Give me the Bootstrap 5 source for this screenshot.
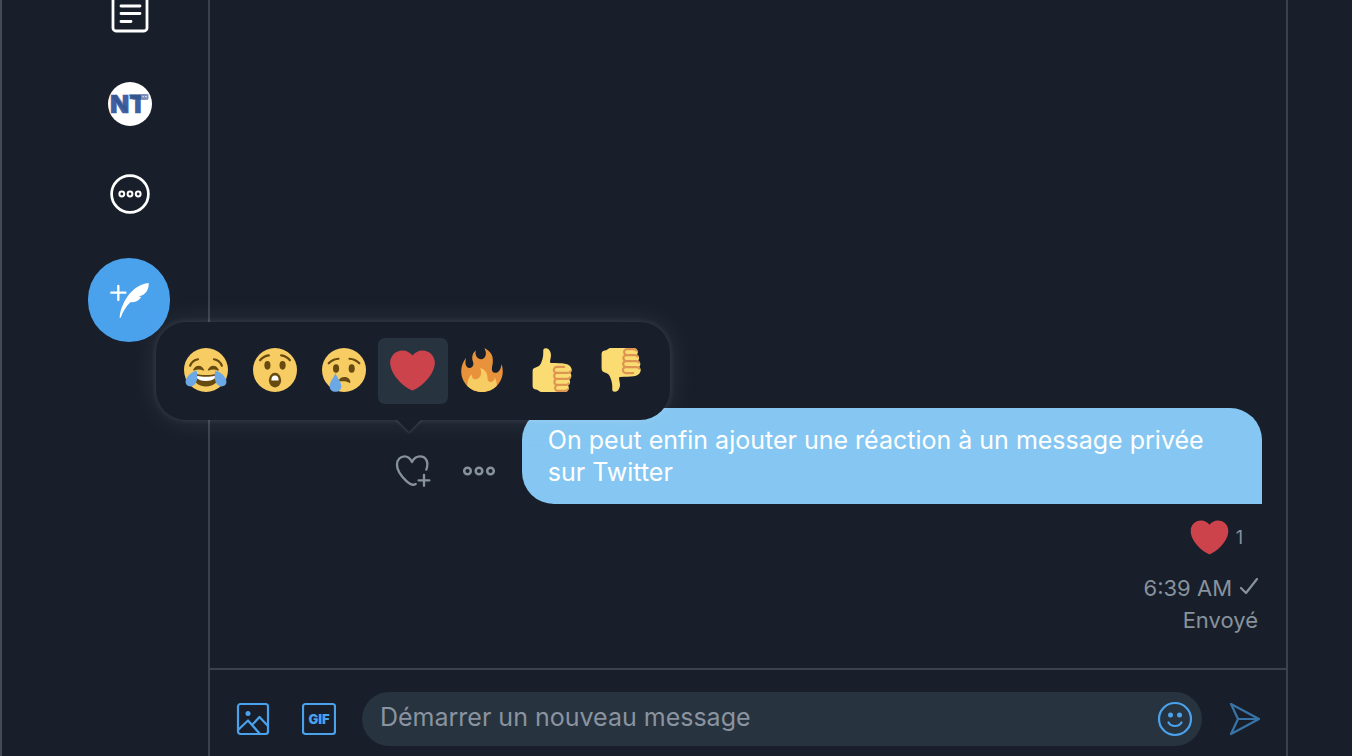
<!DOCTYPE html>
<html lang="fr" data-bs-theme="dark">
<head>
<meta charset="utf-8">
<meta name="viewport" content="width=device-width, initial-scale=1">
<title>Messages</title>
<link href="https://cdn.jsdelivr.net/npm/bootstrap@5.3.0/dist/css/bootstrap.min.css" rel="stylesheet">
<style>
  :root { --ink: #181f2a; --line: #3a424d; --soft: #27333f; --muted-ink: #87929d; --blue: #4aa1ec; --bubble: #85c7f2; }
  body { background: var(--ink); font-family: Inter, "Liberation Sans", sans-serif; color: #fff; }
  svg { display: block; }
  .side { width: 208px; border-left: 2px solid #424a55; padding-right: 38px; }
  .side-list { width: 82px; margin-top: -31px; }
  .side-item { height: 90px; padding-left: 2px; color: #fff; }
  .plain { background: none; border: 0; padding: 0; color: inherit; }
  .compose { height: 84px; margin-top: 19px; border-radius: 42px; background: var(--blue); }
  .chat { border: solid var(--line); border-width: 0 2px; margin-right: 64px; }
  .thread { padding: 0 24px 32px; }
  .bubble { width: 72%; padding: 16px 26px; background: var(--bubble); border-radius: 32px 32px 0 32px; font-size: 25px; line-height: 32px; }
  .actions { gap: 32px; margin: 0 27px 15px 0; color: var(--muted-ink); }
  .picker { bottom: 100%; left: 50%; transform: translateX(-50%); width: 514px; height: 98px; margin-bottom: 33px; padding: 16px; border-radius: 30px; background: var(--ink); z-index: 5;
    box-shadow: 0 0 6px rgba(255,255,255,.12), 0 0 30px rgba(200,215,240,.11); }
  .picker-arrow { top: 100%; left: 240px; margin-top: -1px; filter: drop-shadow(0 1px 1px rgba(255,255,255,.16)); }
  .pick { border-radius: 7px; padding-bottom: 2px; }
  .pick.active { background: var(--soft); }
  .reaction { padding: 16px 19px 16px 0; gap: 7px; font-size: 18px; line-height: 36px; color: var(--muted-ink); }
  .status { padding-right: 4px; font-size: 22px; line-height: 32px; color: var(--muted-ink); }
  .composer { border-top: 2px solid var(--line); padding: 22px 24px 10px 26px; color: var(--blue); }
  .entry { height: 54px; border-radius: 27px; background: var(--soft); padding: 0 9px 0 18px; margin: 0 26px; }
  .entry input { font-size: 25px; line-height: 32px; color: #fff; background: none; border: 0; outline: 0; padding: 0 0 4px; min-width: 0; }
  .entry input::placeholder { color: #8a939f; opacity: 1; }
  .send { opacity: .65; }
</style>
</head>
<body>
<svg width="0" height="0" class="position-absolute" aria-hidden="true">
  <symbol id="heart" viewBox="0 0 36 36"><path fill="#cc434c" d="M35.885 11.833c0-5.45-4.418-9.868-9.867-9.868-3.308 0-6.227 1.633-8.018 4.129-1.791-2.496-4.71-4.129-8.017-4.129-5.45 0-9.868 4.417-9.868 9.868 0 .772.098 1.52.266 2.241C1.751 22.587 11.216 31.568 18 34.034c6.783-2.466 16.249-11.447 17.617-19.959.17-.721.268-1.469.268-2.242z"/></symbol>
  <symbol id="thumb" viewBox="0 0 36 36"><path fill="#fadc72" d="M34.956 17.916c0-.503-.12-.975-.321-1.404-1.341-4.326-7.619-4.01-16.549-4.221-1.493-.035-.639-1.798-.115-5.668.341-2.517-1.282-6.382-4.01-6.382-4.498 0-.171 3.548-4.148 12.322-2.125 4.688-6.875 2.062-6.875 6.771v10.719c0 1.833.18 3.595 2.758 3.885C8.195 34.219 7.633 36 11.238 36h18.044c1.838 0 3.333-1.496 3.333-3.334 0-.762-.267-1.456-.698-2.018 1.02-.571 1.72-1.649 1.72-2.899 0-.76-.266-1.454-.696-2.015 1.023-.57 1.725-1.649 1.725-2.901 0-.909-.368-1.733-.961-2.336.757-.611 1.251-1.535 1.251-2.581z"/><path fill="#df9552" d="M23.02 21.249h8.604c1.17 0 2.268-.626 2.866-1.633.246-.415.109-.952-.307-1.199-.415-.247-.952-.108-1.199.307-.283.479-.806.775-1.361.775h-8.81c-.873 0-1.583-.71-1.583-1.583s.71-1.583 1.583-1.583H28.7c.483 0 .875-.392.875-.875s-.392-.875-.875-.875h-5.888c-1.838 0-3.333 1.495-3.333 3.333 0 1.025.475 1.932 1.205 2.544-.615.605-.998 1.445-.998 2.373 0 1.028.478 1.938 1.212 2.549-.611.604-.99 1.441-.99 2.367 0 1.12.559 2.108 1.409 2.713-.524.589-.852 1.356-.852 2.204 0 1.838 1.495 3.333 3.333 3.333h5.484c1.17 0 2.269-.625 2.867-1.632.247-.415.11-.952-.305-1.199-.416-.245-.953-.11-1.199.305-.285.479-.808.776-1.363.776h-5.484c-.873 0-1.583-.71-1.583-1.583s.71-1.583 1.583-1.583h6.506c1.17 0 2.27-.626 2.867-1.633.247-.416.11-.953-.305-1.199-.419-.251-.954-.11-1.199.305-.289.487-.799.777-1.363.777h-7.063c-.873 0-1.583-.711-1.583-1.584s.71-1.583 1.583-1.583h8.091c1.17 0 2.269-.625 2.867-1.632.247-.415.11-.952-.305-1.199-.417-.246-.953-.11-1.199.305-.289.486-.799.776-1.363.776H23.02c-.873 0-1.583-.71-1.583-1.583s.71-1.584 1.583-1.584z"/></symbol>
</svg>

<div class="d-flex min-vh-100 overflow-hidden">
  <nav class="side flex-shrink-0 d-flex flex-column align-items-end" aria-label="Navigation">
    <div class="side-list d-flex flex-column">
      <a href="#" class="side-item d-flex align-items-center justify-content-center" aria-label="Listes">
        <svg width="40" height="40" viewBox="0 0 40 40" fill="none" stroke="#fff" stroke-width="2.8" stroke-linecap="round"><rect x="3" y="1" width="34" height="36" rx="3"/><path d="M11 4H30M11 12H30M11 19.500H30M11 27.500H21"/></svg>
      </a>
      <a href="#" class="side-item d-flex align-items-center justify-content-center" aria-label="Profil">
        <svg width="44" height="44" viewBox="0 0 44 44"><circle cx="22" cy="22" r="22" fill="#fff"/><text x="2" y="31" font-family="Inter, sans-serif" font-size="25" font-weight="900" fill="#3f60a2" stroke="#3f60a2" stroke-width=".6">NT</text><path d="M21 12.500h19v5H25z" fill="#35558f"/><path d="M33 12.500h7.500v4.500H33z" fill="#7d8fb8"/><path d="M34.500 14.700h1.500m1 0h2" stroke="#dfe5f0"/><path d="M4 13.500l5-1 10 13v5L4 16z" fill="#2d4984" opacity=".4"/></svg>
      </a>
      <a href="#" class="side-item d-flex align-items-center justify-content-center" aria-label="Plus">
        <svg width="40" height="40" viewBox="0 0 40 40" fill="none" stroke="#fff" stroke-width="2.700"><circle cx="20" cy="20" r="18.400"/><g stroke-width="2"><circle cx="11.800" cy="20" r="2.400"/><circle cx="20" cy="20" r="2.400"/><circle cx="28.200" cy="20" r="2.400"/></g></svg>
      </a>
      <button type="button" class="plain compose d-flex align-items-center justify-content-center" aria-label="Tweeter">
        <svg width="44" height="42" viewBox="0 0 132 126"><path d="M13 41h42M34 21v42" stroke="#fff" stroke-width="7" stroke-linecap="round"/><path fill="#fff" d="M38 117C38 98 47 74 62 52 79 29 98 15 125 12 126 25 122 37 112 45 106 49 100 51 95 53L103 54C96 65 84 71 70 70 57 82 48 98 41 116z"/></svg>
      </button>
    </div>
  </nav>

  <main class="chat flex-grow-1 d-flex flex-column">
    <section class="thread flex-grow-1 d-flex flex-column justify-content-end">
      <div class="d-flex justify-content-end align-items-end">
        <div class="actions d-flex align-items-center">
          <div class="position-relative">
            <button type="button" class="plain d-block" aria-label="Réagir">
              <svg width="36" height="36" viewBox="0 0 108 108" fill="none" stroke="currentColor" stroke-width="7" stroke-linecap="round" stroke-linejoin="round"><path d="M62 93C53 99 44 94 32 82 15 65 6 51 6 35 6 19 17 10 29 10 40 10 46 17 51 27 56 17 64 10 75 10 93 10 102 27 94 50M87 66V98M71 82H103"/></svg>
            </button>
            <div class="picker position-absolute d-flex" role="toolbar" aria-label="Réactions">
              <button type="button" class="plain pick flex-fill d-flex align-items-center justify-content-center" aria-label="Joie">
                <svg width="44" height="44" viewBox="0 0 36 36"><circle cx="18" cy="18" r="18" fill="#f7cc63"/><g fill="none" stroke="#664a10" stroke-width="1.800" stroke-linecap="round"><path d="M5 14.500Q6.800 10 11.500 9.200M31 14.500Q29.200 10 24.500 9.200"/></g><path fill="#664a10" d="M28.457 17.797c-.06-.135-1.499-3.297-4.457-3.297-2.957 0-4.397 3.162-4.457 3.297-.092.207-.032.449.145.591.175.142.426.147.61.014.012-.009 1.262-.902 3.702-.902 2.426 0 3.674.881 3.702.901.088.066.194.099.298.099.11 0 .221-.037.312-.109.177-.142.238-.386.145-.594zm-12 0c-.06-.135-1.499-3.297-4.457-3.297-2.957 0-4.397 3.162-4.457 3.297-.092.207-.032.449.145.591.175.142.426.147.61.014.012-.009 1.262-.902 3.702-.902 2.426 0 3.674.881 3.702.901.088.066.194.099.298.099.11 0 .221-.037.312-.109.177-.142.238-.386.145-.594zM18 22c-3.600 0-6-.400-9-1-.700-.100-2 0-2 2 0 4 4.600 8.500 11 8.500s11-4.500 11-8.500c0-2-1.300-2.100-2-2-3 .600-5.400 1-9 1z"/><path fill="#fff" d="M9 22.500s3 1 9 1 9-1 9-1-1.500 4.500-9 4.500-9-4.500-9-4.500z"/><path id="tear" fill="#6ba8e5" d="M10.300 18.500C6 19.500 1.300 24 1.300 27.500 1.300 30.300 3.200 31.500 5.300 31.500 9.900 31.500 12 25.500 10.300 18.500z"/><use href="#tear" transform="matrix(-1 0 0 1 36 0)"/></svg>
              </button>
              <button type="button" class="plain pick flex-fill d-flex align-items-center justify-content-center" aria-label="Surprise">
                <svg width="44" height="44" viewBox="0 0 36 36"><circle cx="18" cy="18" r="18" fill="#f7cc63"/><path d="M5.800 10Q8.500 6.500 13 6M30.200 10Q27.500 6.500 23 6" fill="none" stroke="#664a10" stroke-width="1.800" stroke-linecap="round"/><g fill="#664a10"><ellipse cx="11.800" cy="14.200" rx="2.500" ry="3.500"/><ellipse cx="24.200" cy="14.200" rx="2.500" ry="3.500"/><ellipse cx="18" cy="26.300" rx="5" ry="6"/></g><path fill="#fff" d="M15 26.500Q15 22.500 18 22.500T21 26.500z"/></svg>
              </button>
              <button type="button" class="plain pick flex-fill d-flex align-items-center justify-content-center" aria-label="Tristesse">
                <svg width="44" height="44" viewBox="0 0 36 36"><circle cx="18" cy="18" r="18" fill="#f7cc63"/><path d="M5.500 12.500Q9 9 13.500 8.800M30.500 12.500Q27 9 22.500 8.800" fill="none" stroke="#664a10" stroke-width="1.800" stroke-linecap="round"/><g fill="#664a10"><ellipse cx="11.500" cy="16.800" rx="2.500" ry="3.500"/><ellipse cx="24.300" cy="16.800" rx="2.500" ry="3.500"/><path d="M13.500 27.500C14 25 16 23.800 18.500 23.800 21.500 23.800 23.200 26 23.200 28 23.200 29 22.500 28.800 21.800 28.300 19.500 26.800 16.500 27.300 13.500 27.500z"/></g><path fill="#6ba8e5" d="M11 20.500C12 24 15.800 27.500 15.800 31.200 15.800 34 13.800 35.800 11 35.800S6.200 34 6.200 31.200C6.200 27.500 10 24 11 20.500z"/></svg>
              </button>
              <button type="button" class="plain pick active flex-fill d-flex align-items-center justify-content-center" aria-label="Cœur"><svg width="45" height="45"><use href="#heart"/></svg></button>
              <button type="button" class="plain pick flex-fill d-flex align-items-center justify-content-center" aria-label="Feu">
                <svg width="44" height="44" viewBox="0 0 36 36"><path fill="#e8923b" d="M35 19c0-2.062-.367-4.039-1.040-5.868-.460 5.389-3.333 8.157-6.335 6.868-2.812-1.208-.917-5.917-.777-8.164.236-3.809-.012-8.169-6.931-11.794 2.875 5.500.333 8.917-2.333 9.125-2.958.231-5.667-2.542-4.667-7.042-3.238 2.386-3.332 6.402-2.333 9 1.042 2.708-.042 4.958-2.583 5.208-2.840.280-4.418-3.041-2.963-8.333C2.520 10.965 1 14.805 1 19c0 9.389 7.611 17 17 17s17-7.611 17-17z"/><path fill="#f7cc63" d="M28.394 23.999c.148 3.084-2.561 4.293-4.019 3.709-2.106-.843-1.541-2.291-2.083-5.291s-2.625-5.083-5.708-6c2.250 6.333-1.247 8.667-3.080 9.084-1.872.426-3.753-.001-3.968-4.007C7.352 23.668 6 26.676 6 30c0 .368.023.730.055 1.090C9.125 34.124 13.342 36 18 36s8.875-1.876 11.945-4.910c.032-.360.055-.722.055-1.090 0-2.187-.584-4.236-1.606-6.001z"/></svg>
              </button>
              <button type="button" class="plain pick flex-fill d-flex align-items-center justify-content-center" aria-label="J'aime"><svg width="44" height="44"><use href="#thumb"/></svg></button>
              <button type="button" class="plain pick flex-fill d-flex align-items-center justify-content-center" aria-label="Je n'aime pas"><svg width="44" height="44" viewBox="0 0 44 44"><use href="#thumb" width="44" height="44" transform="matrix(1 0 0 -1 0 44)"/></svg></button>
              <svg class="picker-arrow position-absolute" width="26" height="14" viewBox="0 0 26 14"><path fill="#181f2a" d="M0 0H26L13 13z"/></svg>
            </div>
          </div>
          <button type="button" class="plain d-block" aria-label="Options">
            <svg width="32" height="12" viewBox="0 0 32 12" fill="none" stroke="currentColor" stroke-width="2.500"><circle cx="4.500" cy="6" r="3.300"/><circle cx="16" cy="6" r="3.300"/><circle cx="27.500" cy="6" r="3.300"/></svg>
          </button>
        </div>
        <div class="bubble">On peut enfin ajouter une réaction à un message privée sur Twitter</div>
      </div>
      <div class="reaction d-flex justify-content-end align-items-center"><svg width="39" height="36" viewBox="0 1.500 36 34"><use href="#heart" width="36" height="36"/></svg><span>1</span></div>
      <div class="status text-end">
        <div class="d-flex justify-content-end align-items-center gap-2">6:39 AM
          <svg width="18" height="20" viewBox="0 0 18 20" fill="none" stroke="currentColor" stroke-width="2.200" stroke-linecap="round" stroke-linejoin="round"><path d="M1 10L6 15 17 1"/></svg></div>
        <div>Envoyé</div>
      </div>
    </section>

    <form class="composer d-flex align-items-center" onsubmit="return false">
      <button type="button" class="plain" aria-label="Image">
        <svg width="34" height="34" viewBox="0 0 34 34" fill="none" stroke="currentColor" stroke-width="2.200" stroke-linejoin="round"><rect x="2" y="2" width="30" height="30" rx="2.500"/><path d="M2 28L12 18.500 24 32M16 23L23.500 15 32 24"/><circle cx="12" cy="11.500" r="2.500" fill="currentColor" stroke="none"/></svg>
      </button>
      <button type="button" class="plain ms-4 ps-2" aria-label="GIF">
        <svg width="34" height="34" viewBox="0 0 34 34"><rect x="1" y="2" width="32" height="30" rx="2.500" fill="none" stroke="currentColor" stroke-width="2.200"/><text x="17" y="22" text-anchor="middle" font-family="Inter, sans-serif" font-size="13" font-weight="900" fill="currentColor">GIF</text></svg>
      </button>
      <div class="entry flex-grow-1 d-flex align-items-center">
        <input type="text" class="flex-grow-1" placeholder="Démarrer un nouveau message" aria-label="Démarrer un nouveau message">
        <button type="button" class="plain" aria-label="Emoji">
          <svg width="36" height="36" viewBox="0 0 36 36" fill="none" stroke="currentColor" stroke-width="2.200" stroke-linecap="round"><circle cx="18" cy="18" r="16"/><path d="M11.500 21.500Q13.500 25 18 25T24.500 21.500"/><g fill="currentColor" stroke="none"><circle cx="13.500" cy="14" r="2.500"/><circle cx="22.500" cy="14" r="2.500"/></g></svg>
        </button>
      </div>
      <button type="submit" class="plain send" aria-label="Envoyer">
        <svg width="34" height="34" viewBox="0 0 34 34" fill="none" stroke="currentColor" stroke-width="2.200" stroke-linejoin="round"><path d="M3 2L31 17 3 32 10 17zM10 17H31"/></svg>
      </button>
    </form>
  </main>
</div>
<script src="https://cdn.jsdelivr.net/npm/bootstrap@5.3.0/dist/js/bootstrap.bundle.min.js"></script>
</body>
</html>
